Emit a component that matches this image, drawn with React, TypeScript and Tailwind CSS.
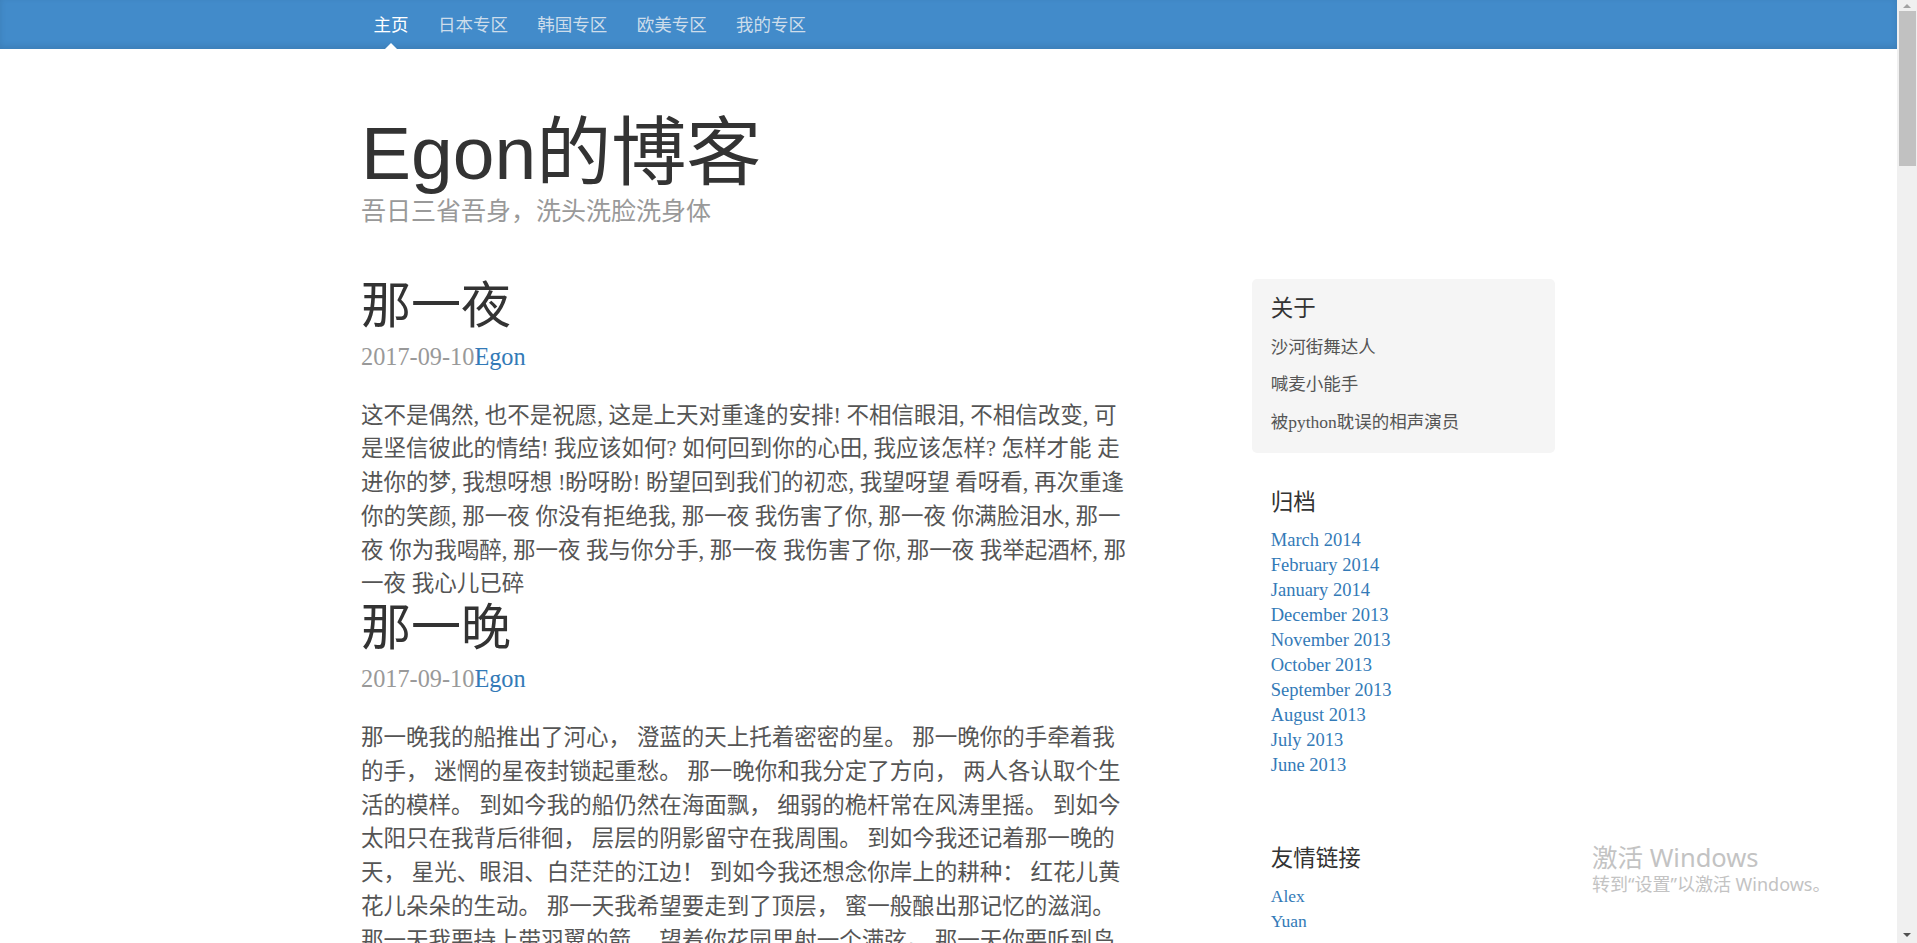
import React from "react";

const SANS = "font-['Liberation_Sans','Noto_Sans_CJK_SC',sans-serif]";

const navItems = ["主页", "日本专区", "韩国专区", "欧美专区", "我的专区"];

const post1 = [
  "这不是偶然, 也不是祝愿, 这是上天对重逢的安排! 不相信眼泪, 不相信改变, 可",
  "是坚信彼此的情结! 我应该如何? 如何回到你的心田, 我应该怎样? 怎样才能 走",
  "进你的梦, 我想呀想 !盼呀盼! 盼望回到我们的初恋, 我望呀望 看呀看, 再次重逢",
  "你的笑颜, 那一夜 你没有拒绝我, 那一夜 我伤害了你, 那一夜 你满脸泪水, 那一",
  "夜 你为我喝醉, 那一夜 我与你分手, 那一夜 我伤害了你, 那一夜 我举起酒杯, 那",
  "一夜 我心儿已碎",
];

const post2 = [
  "那一晚我的船推出了河心， 澄蓝的天上托着密密的星。 那一晚你的手牵着我",
  "的手， 迷惘的星夜封锁起重愁。 那一晚你和我分定了方向， 两人各认取个生",
  "活的模样。 到如今我的船仍然在海面飘， 细弱的桅杆常在风涛里摇。 到如今",
  "太阳只在我背后徘徊， 层层的阴影留守在我周围。 到如今我还记着那一晚的",
  "天， 星光、眼泪、白茫茫的江边！ 到如今我还想念你岸上的耕种： 红花儿黄",
  "花儿朵朵的生动。 那一天我希望要走到了顶层， 蜜一般酿出那记忆的滋润。",
  "那一天我要持上带羽翼的箭， 望着你花园里射一个满弦。 那一天你要听到鸟",
  "般的歌声， 那是我的心在那天际飞旋。",
];

const archives = [
  "March 2014",
  "February 2014",
  "January 2014",
  "December 2013",
  "November 2013",
  "October 2013",
  "September 2013",
  "August 2013",
  "July 2013",
  "June 2013",
];

function Post({ title, lines }: { title: string; lines: string[] }) {
  return (
    <article>
      <h2 className={`${SANS} mb-[6.25px] text-[50px] font-normal leading-[55px] text-[#333]`}>{title}</h2>
      <p className="mb-[25px] text-[24.3px] leading-[33.75px] text-[#999]">
        2017-09-10<a className="text-[#337ab7]">Egon</a>
      </p>
      <div>
        {lines.map((l, i) => (
          <span key={i} className="block whitespace-nowrap">
            {l}
          </span>
        ))}
      </div>
    </article>
  );
}

export default function App() {
  return (
    <div className="relative flex h-[943px] w-[1917px] overflow-hidden bg-white">
      <div className="h-full w-[1897px] shrink-0 overflow-hidden font-['Liberation_Serif','Noto_Sans_CJK_SC',serif] text-[#555]">
        {/* masthead */}
        <div className="h-[49px] bg-[#428bca] shadow-[inset_0_-2.5px_6px_rgba(0,0,0,0.1)]">
          <nav className="mx-auto flex h-full w-[1212.5px] gap-[4.4px] px-[18.75px]">
            {navItems.map((n, i) => (
              <a
                key={n}
                className={`relative flex h-full items-center px-[12.5px] pb-[2px] font-['Noto_Sans_CJK_SC',sans-serif] text-[17.5px] font-normal leading-[25px] ${
                  i === 0 ? "text-white" : "text-[#cdddeb]"
                }`}
              >
                {n}
                {i === 0 && (
                  <span className="absolute bottom-0 left-1/2 -ml-[6.25px] h-0 w-0 border-x-[6.25px] border-b-[6.25px] border-x-transparent border-b-white" />
                )}
              </a>
            ))}
          </nav>
        </div>

        <div className="mx-auto w-[1212.5px] px-[18.75px]">
          <header className="pt-[25px]">
            <h1 className={`${SANS} mt-[37.5px] text-[75px] font-normal leading-[82.5px] text-[#333]`}>Egon的博客</h1>
            <p className="mb-[49px] text-[25px] leading-[35.7px] text-[#999]">吾日三省吾身，洗头洗脸洗身体</p>
          </header>

          <div className="flex">
            <main className="w-[771px] shrink-0 text-[22.5px] leading-[33.75px]">
              <Post title="那一夜" lines={post1} />
              <Post title="那一晚" lines={post2} />
            </main>

            <aside className="ml-[120px] w-[303px] shrink-0 text-[17.5px] leading-[25px]">
              <div className="mb-[18.75px] rounded-[5px] bg-[#f5f5f5] p-[18.75px]">
                <h4 className={`${SANS} mb-[12.5px] text-[22.5px] font-normal leading-[24.75px] text-[#333]`}>关于</h4>
                <p className="mb-[12.5px]">沙河街舞达人</p>
                <p className="mb-[12.5px]">喊麦小能手</p>
                <p>被python耽误的相声演员</p>
              </div>

              <div className="mb-[18.75px] p-[18.75px]">
                <h4 className={`${SANS} mb-[12.5px] text-[22.5px] font-normal leading-[24.75px] text-[#333]`}>归档</h4>
                <ol className="mb-[12.5px] text-[18.5px]">
                  {archives.map((a) => (
                    <li key={a}>
                      <a className="text-[#337ab7]">{a}</a>
                    </li>
                  ))}
                </ol>
              </div>

              <div className="p-[18.75px]">
                <h4 className={`${SANS} mb-[12.5px] text-[22.5px] font-normal leading-[24.75px] text-[#333]`}>友情链接</h4>
                <ol>
                  <li>
                    <a className="text-[#337ab7]">Alex</a>
                  </li>
                  <li>
                    <a className="text-[#337ab7]">Yuan</a>
                  </li>
                </ol>
              </div>
            </aside>
          </div>
        </div>
      </div>

      {/* scrollbar */}
      <div className="flex h-full w-[20px] shrink-0 flex-col bg-[#f0f0f0]">
        <div className="flex h-[11px] items-center justify-center">
          <span className="h-0 w-0 border-x-[4px] border-b-[4px] border-x-transparent border-b-[#a3a3a3]" />
        </div>
        <div className="ml-[2px] h-[155px] w-[17px] bg-[#c1c1c1]" />
        <div className="flex-1" />
        <div className="flex h-[12px] items-start justify-center pt-[2px]">
          <span className="h-0 w-0 border-x-[4px] border-t-[4px] border-x-transparent border-t-[#505050]" />
        </div>
      </div>

      {/* windows activation watermark */}
      <div className="pointer-events-none absolute left-[1592px] top-[842px] font-['Noto_Sans','Noto_Sans_CJK_SC',sans-serif] text-[#c3c3c3]">
        <div className="text-[25.5px] leading-[30px]">激活 Windows</div>
        <div className="text-[18px] leading-[24px]">转到“设置”以激活 Windows。</div>
      </div>
    </div>
  );
}
